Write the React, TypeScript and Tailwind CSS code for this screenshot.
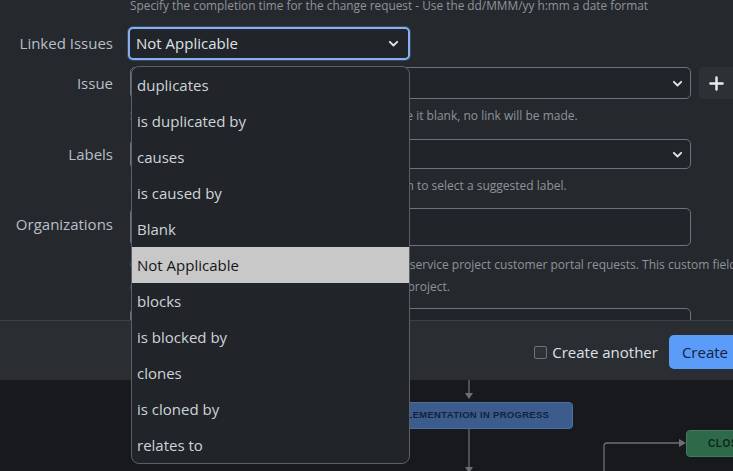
import React from "react";

const font = "font-['Open_Sans','Noto_Sans',sans-serif]";

function Chevron({ className = "" }: { className?: string }) {
  return (
    <svg viewBox="0 0 16 16" className={className} fill="none">
      <path d="M3.5 6l4.5 4.5L12.5 6" stroke="#dee2e6" strokeWidth="2.4" strokeLinecap="round" strokeLinejoin="round" />
    </svg>
  );
}

function Label({ children, className = "" }: { children: React.ReactNode; className?: string }) {
  return <div className={`w-[113px] shrink-0 text-right text-[15px] text-[#b8bfc6] ${className}`}>{children}</div>;
}

const items = [
  "duplicates",
  "is duplicated by",
  "causes",
  "is caused by",
  "Blank",
  "Not Applicable",
  "blocks",
  "is blocked by",
  "clones",
  "is cloned by",
  "relates to",
];

export default function App() {
  return (
    <div className={`relative w-[733px] h-[471px] overflow-hidden bg-[#18191c] ${font}`}>
      {/* Modal */}
      <div className="w-[760px] h-[380px] flex flex-col bg-[#25292d]">
        <div className="h-[320px] overflow-hidden">
          <p className="-mt-[5px] pl-[130px] text-[11.85px] leading-[20px] text-[#8d949b] whitespace-nowrap">
            Specify the completion time for the change request - Use the dd/MMM/yy h:mm a date format
          </p>

          {/* Linked Issues */}
          <div className="mt-[12px] flex items-center gap-[16px]">
            <Label>Linked Issues</Label>
            <div className="h-[33px] w-[282px] -ml-[1px] rounded-[5px] border-2 border-[#86b0f0] bg-[#212428] flex items-center justify-between pl-[6px] pr-[8px] shadow-[0_0_0_1px_rgba(110,168,254,0.25)]">
              <span className="text-[15px] text-[#dee2e6]">Not Applicable</span>
              <Chevron className="w-[13px] h-[13px]" />
            </div>
          </div>

          {/* Issue */}
          <div className="mt-[7px] flex items-center gap-[17px]">
            <Label>Issue</Label>
            <div className="h-[32px] w-[561px] rounded-[5px] border border-[#6c737a] bg-[#212428] flex items-center justify-end pr-[6px]">
              <Chevron className="w-[13px] h-[13px]" />
            </div>
            <div className="h-[32px] w-[38px] -ml-[9px] rounded-[4px] bg-[#2d3136] flex items-center justify-center pr-[4px]">
              <svg viewBox="0 0 16 16" className="w-[15px] h-[15px]">
                <path d="M8 1.5v13M1.5 8h13" stroke="#e9ecef" strokeWidth="2.6" strokeLinecap="round" />
              </svg>
            </div>
          </div>
          <p className="mt-[6px] pl-[130px] text-[12px] leading-[22px] text-[#8d949b] whitespace-nowrap">
            Start typing to search for issues to link. If you leave it blank, no link will be made.
          </p>

          {/* Labels */}
          <div className="mt-[12px] flex items-center gap-[17px]">
            <Label>Labels</Label>
            <div className="h-[30px] w-[561px] rounded-[5px] border border-[#6c737a] bg-[#212428] flex items-center justify-end pr-[6px]">
              <Chevron className="w-[13px] h-[13px]" />
            </div>
          </div>
          <p className="mt-[6px] pl-[130px] text-[12px] leading-[22px] text-[#8d949b] whitespace-nowrap">
            Begin typing to find or create labels, or press down to select a suggested label.
          </p>

          {/* Organizations */}
          <div className="mt-[11px] flex items-start gap-[17px]">
            <Label className="pt-[5px]">Organizations</Label>
            <div className="h-[38px] w-[561px] rounded-[5px] border border-[#6c737a] bg-[#212428]" />
          </div>
          <p className="mt-[8px] pl-[130px] text-[12px] leading-[22px] text-[#8d949b] whitespace-nowrap">
            Organizations let you group customers from their service project customer portal requests. This custom field is
            <br />
            only visible to agents and admins working on this project.
          </p>

          {/* Next field */}
          <div className="mt-[10px] flex items-center gap-[17px]">
            <Label>Team</Label>
            <div className="h-[38px] w-[561px] rounded-[5px] border border-[#6c737a] bg-[#212428]" />
          </div>
        </div>

        {/* Footer */}
        <div className="h-[60px] border-t border-[#3d4147] bg-[#2a2e33] flex items-center justify-end pr-[19px] pt-[3px]">
          <label className="flex items-center gap-[5px] mr-[11px]">
            <span className="w-[13px] h-[13px] rounded-[2px] border border-[#6c737a] bg-[#2f3338]" />
            <span className="text-[15px] text-[#dee2e6]">Create another</span>
          </label>
          <button className="h-[34px] px-[13px] rounded-[5px] bg-[#5b9cf8] text-[15px] text-[#10233f]">Create</button>
        </div>
      </div>

      {/* Workflow diagram canvas */}
      <div className="relative h-[91px]">
        <svg className="absolute inset-0" width="733" height="91" viewBox="0 0 733 91">
          <g stroke="#6b6f75" strokeWidth="1.3" fill="none">
            <path d="M469 0 V16" />
            <path d="M469 49 V91" />
            <path d="M604 91 V66 Q604 63 607 63 H680" />
          </g>
          <g fill="#6b6f75">
            <path d="M465 13 L473 13 L469 19 Z" />
            <path d="M465 87 L473 87 L469 93 Z" />
            <path d="M679 59 L686 63 L679 67 Z" />
          </g>
        </svg>
        <div className="absolute left-[365px] top-[22px] w-[208px] h-[27px] rounded-[4px] bg-[#3b5c8c] border border-[#4d6f9f] flex items-center justify-center font-['Liberation_Sans',sans-serif] text-[9.5px] font-bold text-[#14233a] tracking-[0.3px]">
          IMPLEMENTATION IN PROGRESS
        </div>
        <div className="absolute left-[686px] top-[50px] w-[80px] h-[27px] rounded-[4px] bg-[#2e6a49] border border-[#3e7c5a] flex items-center pl-[21px] font-['Liberation_Sans',sans-serif] text-[10px] font-bold text-[#10261a] tracking-[0.6px]">
          CLOSED
        </div>
      </div>

      {/* Dropdown list */}
      <div className="absolute left-[131px] top-[66px] w-[279px] rounded-[8px] border border-[#5b6067] bg-[#212428] overflow-hidden">
        {items.map((t) => (
          <div
            key={t}
            className={`h-[36px] flex items-center pl-[5px] text-[15px] ${
              t === "Not Applicable" ? "bg-[#c8c8c8] text-[#161616]" : "text-[#ced4da]"
            }`}
          >
            {t}
          </div>
        ))}
      </div>
    </div>
  );
}
